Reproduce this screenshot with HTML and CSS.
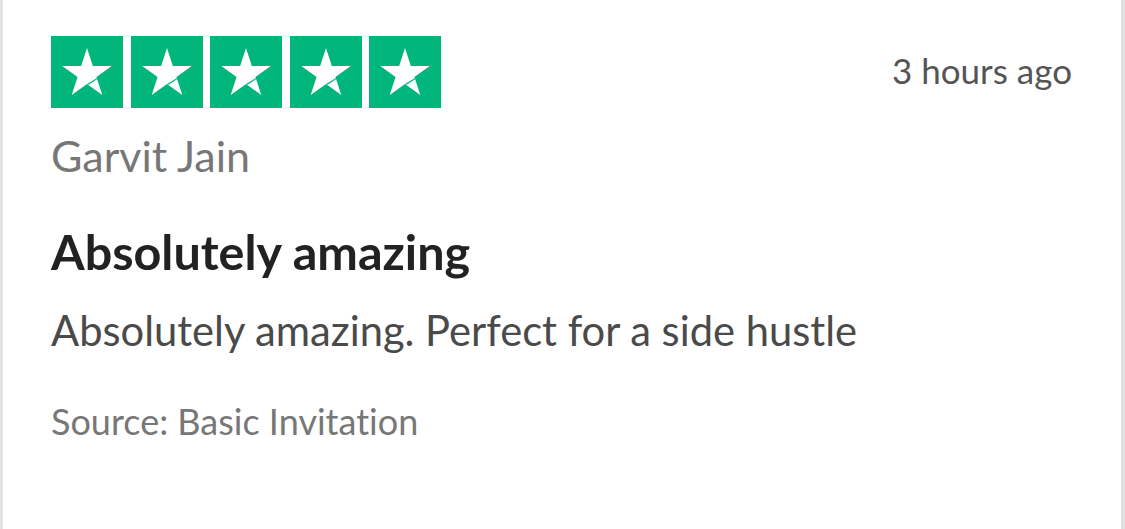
FILE: index.html
```html
<!DOCTYPE html>
<html lang="en">
<head>
<meta charset="utf-8">
<title>Review</title>
<link rel="stylesheet" href="styles.css">
</head>
<body>
<article class="review">
  <header class="review-head">
    <div class="stars">
      <span class="star-box"><svg viewBox="0 0 100 100"><polygon points="50,0 61.23,34.55 97.55,34.55 68.17,55.9 79.39,90.45 50,69.1 20.61,90.45 31.83,55.9 2.45,34.55 38.77,34.55" fill="#fff"/><polygon points="50,69.1 71,56.5 71.5,58.5 53,70.5" fill="#00b67a"/></svg></span>
      <span class="star-box"><svg viewBox="0 0 100 100"><polygon points="50,0 61.23,34.55 97.55,34.55 68.17,55.9 79.39,90.45 50,69.1 20.61,90.45 31.83,55.9 2.45,34.55 38.77,34.55" fill="#fff"/><polygon points="50,69.1 71,56.5 71.5,58.5 53,70.5" fill="#00b67a"/></svg></span>
      <span class="star-box"><svg viewBox="0 0 100 100"><polygon points="50,0 61.23,34.55 97.55,34.55 68.17,55.9 79.39,90.45 50,69.1 20.61,90.45 31.83,55.9 2.45,34.55 38.77,34.55" fill="#fff"/><polygon points="50,69.1 71,56.5 71.5,58.5 53,70.5" fill="#00b67a"/></svg></span>
      <span class="star-box"><svg viewBox="0 0 100 100"><polygon points="50,0 61.23,34.55 97.55,34.55 68.17,55.9 79.39,90.45 50,69.1 20.61,90.45 31.83,55.9 2.45,34.55 38.77,34.55" fill="#fff"/><polygon points="50,69.1 71,56.5 71.5,58.5 53,70.5" fill="#00b67a"/></svg></span>
      <span class="star-box"><svg viewBox="0 0 100 100"><polygon points="50,0 61.23,34.55 97.55,34.55 68.17,55.9 79.39,90.45 50,69.1 20.61,90.45 31.83,55.9 2.45,34.55 38.77,34.55" fill="#fff"/><polygon points="50,69.1 71,56.5 71.5,58.5 53,70.5" fill="#00b67a"/></svg></span>
    </div>
    <time class="review-time">3 hours ago</time>
  </header>
  <div class="review-author">Garvit Jain</div>
  <h2 class="review-title">Absolutely amazing</h2>
  <p class="review-body">Absolutely amazing. Perfect for a side hustle</p>
  <div class="review-source">Source: Basic Invitation</div>
</article>
</body>
</html>
```

FILE: styles.css
```css
* { box-sizing: border-box; }
html, body { margin: 0; padding: 0; background: #fff; }
body {
  font-family: Lato, "Open Sans", sans-serif;
  font-variant-ligatures: no-common-ligatures;
}

.review {
  height: 529px;
  border-left: 3px solid #e3e3e3;
  border-right: 4px solid #e0e0e0;
  padding: 36px 49px 0 48px;
  background: #fff;
  display: flex;
  flex-direction: column;
  align-items: flex-start;
}

.review-head {
  align-self: stretch;
  display: flex;
  justify-content: space-between;
  align-items: flex-start;
}

.stars { display: flex; gap: 7.5px; }
.star-box {
  width: 72px;
  height: 72px;
  background: #00b67a;
  display: flex;
  align-items: center;
  justify-content: center;
}
.star-box svg { width: 52px; height: 52px; margin-top: 4px; display: block; }

.review-time {
  font-size: 35px;
  line-height: 1.2;
  color: #555;
  margin-top: 13px;
}

.review-author {
  font-size: 43px;
  line-height: 1.2;
  color: #777;
  margin-top: 21.5px;
}

.review-title {
  font-size: 48.5px;
  line-height: 1.2;
  font-weight: 700;
  color: #222;
  margin: 40.5px 0 0;
}

.review-body {
  font-size: 41.7px;
  line-height: 1.2;
  color: #4a4a4a;
  margin: 25px 0 0;
}

.review-source {
  font-size: 36px;
  line-height: 1.2;
  color: #777;
  margin-top: 45px;
}
```
